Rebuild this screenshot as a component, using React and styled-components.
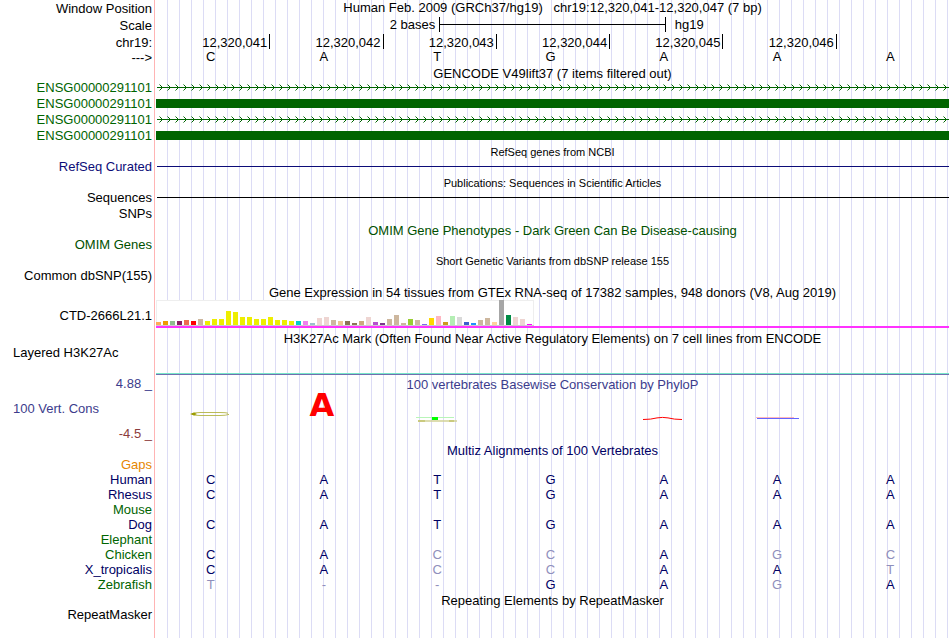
import React from "react";
import styled, { createGlobalStyle } from "styled-components";

const GlobalStyle = createGlobalStyle`
    body{
        margin: 0;
        background: white;
        color: black;
        font-family: "Liberation Sans", Arial, sans-serif;
        font-size: 13px;
    }
`;

const GREEN = "#006400";
const NAVY = "#000064";
const BLUE = "#0c0c78";
const CONS = "#3c3c8c";
const FADED = "#8f8fbc";

const positions = ["12,320,041", "12,320,042", "12,320,043", "12,320,044", "12,320,045", "12,320,046"];

//lower case letters are bases that differ from the human sequence
const species = [
    { name: "Gaps", color: "#e68600", bases: "" },
    { name: "Human", color: NAVY, bases: "CATGAAA" },
    { name: "Rhesus", color: NAVY, bases: "CATGAAA" },
    { name: "Mouse", color: GREEN, bases: "" },
    { name: "Dog", color: NAVY, bases: "CATGAAA" },
    { name: "Elephant", color: GREEN, bases: "" },
    { name: "Chicken", color: GREEN, bases: "CAccAgc" },
    { name: "X_tropicalis", color: NAVY, bases: "CAccAAt" },
    { name: "Zebrafish", color: GREEN, bases: "t--GAgA" },
];

//[height, color] for each tissue
const tissues = [
    [3, "#ffaa56"], [4, "#ee9a00"], [4, "#8fbc8f"], [4, "#8b1c62"], [5, "#ee6a50"], [4, "#ff0000"],
    [6, "#cdb79e"], [4, "#eeee00"], [6, "#eeee00"], [6, "#eeee00"], [14, "#eeee00"], [13, "#eeee00"],
    [8, "#eeee00"], [8, "#eeee00"], [6, "#eeee00"], [6, "#eeee00"], [8, "#eeee00"], [5, "#eeee00"],
    [5, "#eeee00"], [4, "#eeee00"], [4, "#00cdcd"], [4, "#ee82ee"], [2, "#9ac0cd"], [7, "#eed5d2"],
    [8, "#eed5d2"], [5, "#cdb79e"], [4, "#eec591"], [4, "#8b7355"], [2, "#8b7355"], [4, "#cdaa7d"],
    [8, "#eed5d2"], [3, "#b452cd"], [2, "#7a378b"], [6, "#cdb79e"], [10, "#cdb79e"], [2, "#cdb79e"],
    [6, "#9acd32"], [5, "#cdb79e"], [1, "#7a67ee"], [7, "#ffd700"], [9, "#ffb6c1"], [3, "#cd9b1d"],
    [9, "#b4eeb4"], [8, "#d9d9d9"], [3, "#3a5fcd"], [2, "#1e90ff"], [5, "#cdb79e"], [7, "#cdb79e"],
    [3, "#ffd39b"], [25, "#a6a6a6"], [10, "#008b45"], [8, "#eed5d2"], [6, "#eed5d2"], [1, "#ff00ff"],
];

const Bases = ({ bases, color, line }) => (
    <Columns>
        {bases.split("").map((base, i) => (
            <Base key={i} $line={line} $color={base === base.toUpperCase() && base !== "-" ? color : FADED}>
                {base.toUpperCase()}
            </Base>
        ))}
    </Columns>
);

const Intron = ({ id }) => (
    <Arrows width="100%" height="16" aria-hidden="true">
        <defs>
            <pattern id={id} x="1" width="8" height="16" patternUnits="userSpaceOnUse">
                <path d="M0 7.5H8" stroke={GREEN} />
                <path d="M2.5 4.5L5.5 7.5L2.5 10.5" fill="none" stroke={GREEN} />
            </pattern>
        </defs>
        <rect x="1" width="100%" height="16" fill={`url(#${id})`} />
    </Arrows>
);

const Expression = () => (
    <Chart width="378" height="26" shapeRendering="crispEdges" role="img" aria-label="Gene expression">
        <rect x="0.5" y="0.5" width="377" height="25" fill="white" stroke="#eeeeee" />
        <path d="M0 25.5H378" stroke="#cccccc" />
        {tissues.map(([height, color], i) => (
            <rect key={i} x={i * 7} y={25 - height} width="5" height={height} fill={color} />
        ))}
    </Chart>
);

//conservation shapes, one for each base
const logos = [
    <>
        <path d="M72 22.2Q70 21.5 64 21.5H44Q37 21.5 36 23Q37 24.5 44 24.5H64Q70 24.5 73 23.4" fill="none" stroke="#b4b446" strokeWidth="0.9" />
        <path d="M34 23L38 21.6L41 23L38 24.4Z" fill="#9c9c00" />
    </>,
    <text x="53" y="25" textAnchor="middle" fill="#ff0000">A</text>,
    <>
        <path d="M33 26.5H71" stroke="#b8f5b8" />
        <rect x="49" y="26" width="6" height="3" fill="#00ff00" />
        <path d="M35 30H74" stroke="#d2d296" strokeWidth="1.6" />
        <path d="M35 30H42M66 30H71" stroke="#c3c36e" strokeWidth="1.6" />
    </>,
    null,
    <path d="M34 28.5Q42 28.5 48 26.9Q53.5 25.9 59 26.9Q65 28.5 73 28.5" fill="none" stroke="#ff0000" />,
    <>
        <path d="M34 26.5H72" stroke="#ff9c9c" strokeWidth="0.7" />
        <path d="M35 27.5H77" stroke="#6464ff" />
    </>,
    null,
];

const App = () => {
    return (
        <>
            <GlobalStyle />
            <Browser>
                <Row $height={17}>
                    <Label $line={17}>Window Position</Label>
                    <Track>
                        <Title $line={15}>Human Feb. 2009 (GRCh37/hg19) &nbsp; chr19:12,320,041-12,320,047 (7 bp)</Title>
                    </Track>
                </Row>
                <Row $height={17}>
                    <Label $line={17}>Scale</Label>
                    <Scale>
                        <ScaleText $align="right">2 bases</ScaleText>
                        <ScaleBar />
                        <ScaleText>hg19</ScaleText>
                    </Scale>
                </Row>
                <Row $height={16}>
                    <Label $line={17}>chr19:</Label>
                    <Columns>
                        {positions.map((position) => (
                            <Position key={position}>{position}</Position>
                        ))}
                    </Columns>
                </Row>
                <Row $height={15}>
                    <Label>---&gt;</Label>
                    <Bases bases="CATGAAA" color="black" line={13} />
                </Row>

                <TrackTitle>GENCODE V49lift37 (7 items filtered out)</TrackTitle>
                {[1, 2].map((n) => (
                    <React.Fragment key={n}>
                        <Row>
                            <Label $color={GREEN}>ENSG00000291101</Label>
                            <Track><Intron id={`intron-${n}`} /></Track>
                        </Row>
                        <Row>
                            <Label $color={GREEN}>ENSG00000291101</Label>
                            <Track><Exon /></Track>
                        </Row>
                    </React.Fragment>
                ))}

                <TrackTitle $small>RefSeq genes from NCBI</TrackTitle>
                <Row>
                    <Label $color={BLUE}>RefSeq Curated</Label>
                    <Track><Line $color={BLUE} /></Track>
                </Row>

                <TrackTitle $small>Publications: Sequences in Scientific Articles</TrackTitle>
                <Row>
                    <Label>Sequences</Label>
                    <Track><Line $color="black" /></Track>
                </Row>
                <Row>
                    <Label>SNPs</Label>
                </Row>

                <TrackTitle $color="#005000">OMIM Gene Phenotypes - Dark Green Can Be Disease-causing</TrackTitle>
                <Row>
                    <Label $color="#005000">OMIM Genes</Label>
                </Row>

                <TrackTitle $small>Short Genetic Variants from dbSNP release 155</TrackTitle>
                <Row>
                    <Label>Common dbSNP(155)</Label>
                </Row>

                <TrackTitle>Gene Expression in 54 tissues from GTEx RNA-seq of 17382 samples, 948 donors (V8, Aug 2019)</TrackTitle>
                <Row $height={31}>
                    <Label $line={33}>CTD-2666L21.1</Label>
                    <Track>
                        <Expression />
                        <GeneModel />
                    </Track>
                </Row>

                <TrackTitle>H3K27Ac Mark (Often Found Near Active Regulatory Elements) on 7 cell lines from ENCODE</TrackTitle>
                <Row $height={31}>
                    <Label $left>Layered H3K27Ac</Label>
                    <Track><Signal /></Track>
                </Row>

                <Row $height={66}>
                    <Axis>
                        <Label $color={CONS}>4.88 _</Label>
                        <Label $left $color={CONS}>100 Vert. Cons</Label>
                        <Label $color="#8c3c3c">-4.5 _</Label>
                    </Axis>
                    <Track>
                        <Title $color={CONS}>100 vertebrates Basewise Conservation by PhyloP</Title>
                        <Logos>
                            {logos.map((logo, i) => (
                                <svg key={i} width="100%" height="34">{logo}</svg>
                            ))}
                        </Logos>
                    </Track>
                </Row>

                <TrackTitle $color={NAVY}>Multiz Alignments of 100 Vertebrates</TrackTitle>
                {species.map(({ name, color, bases }) => (
                    <Row key={name} $height={15}>
                        <Label $color={color}>{name}</Label>
                        <Bases bases={bases} color={NAVY} />
                    </Row>
                ))}

                <TrackTitle>Repeating Elements by RepeatMasker</TrackTitle>
                <Row>
                    <Label>RepeatMasker</Label>
                </Row>
            </Browser>
        </>
    );
};

//one title line above the items of a track
const TrackTitle = ({ children, $small, $color }) => (
    <Row $height={15}>
        <Label />
        <Track>
            <Title $small={$small} $color={$color}>{children}</Title>
        </Track>
    </Row>
);

const Browser = styled.main`
    box-sizing: border-box;
    min-height: 100vh;
    padding-right: 1px;
    background-image:
        linear-gradient(90deg, transparent 154px, #ffb4b4 154px, #ffb4b4 155px, white 155px, white 156px, transparent 156px),
        linear-gradient(90deg, white 155px, transparent 155px),
        repeating-linear-gradient(90deg, transparent 0, transparent 11px, #dcdcf5 11px, #dcdcf5 12px);
`;

const Row = styled.div`
    display: flex;
    align-items: flex-start;
    height: ${({ $height }) => $height || 16}px;
    white-space: nowrap;
`;

const Label = styled.div`
    box-sizing: border-box;
    flex: none;
    width: 156px;
    padding: 0 4px 0 13px;
    line-height: ${({ $line }) => $line || 16}px;
    text-align: ${({ $left }) => ($left ? "left" : "right")};
    color: ${({ $color }) => $color || "black"};
`;

const Axis = styled.div`
    display: flex;
    flex-direction: column;
    justify-content: space-between;
    height: 100%;
`;

const Track = styled.div`
    flex: 1;
    min-width: 0;
`;

const Title = styled.div`
    height: 15px;
    line-height: ${({ $line }) => $line || 17}px;
    text-align: center;
    font-size: ${({ $small }) => ($small ? 11 : 13)}px;
    color: ${({ $color }) => $color || "black"};
`;

const Columns = styled(Track)`
    display: grid;
    grid-template-columns: repeat(7, 1fr);
`;

const Logos = styled(Columns)`
    svg{
        display: block;
        overflow: visible;
    }
    text{
        font-family: "DejaVu Sans", sans-serif;
        font-size: 32px;
        font-weight: bold;
    }
`;

const Base = styled.span`
    padding-right: 4px;
    line-height: ${({ $line }) => $line || 15}px;
    text-align: center;
    color: ${({ $color }) => $color};
`;

const Position = styled.span`
    height: 15px;
    margin-right: -1px;
    padding-right: 2px;
    border-right: 1px solid black;
    line-height: 17px;
    text-align: right;
`;

const Scale = styled(Track)`
    display: grid;
    grid-template-columns: 5fr 4fr 5fr;
`;

const ScaleText = styled.span`
    padding: 0 4px 0 9px;
    line-height: 15px;
    text-align: ${({ $align }) => $align || "left"};
`;

const ScaleBar = styled.div`
    height: 15px;
    border: solid black;
    border-width: 0 1px;
    background: linear-gradient(black, black) 0 7px / 100% 1px no-repeat;
`;

const Arrows = styled.svg`
    display: block;
`;

const Exon = styled.div`
    height: 9px;
    margin-top: 3px;
    background: ${GREEN};
`;

const Line = styled.div`
    height: 1px;
    margin: 7px 0 0 1px;
    background: ${({ $color }) => $color};
`;

const Chart = styled.svg`
    display: block;
    margin-top: 1px;
`;

const GeneModel = styled.div`
    height: 2px;
    background: #ff32ff;
`;

const Signal = styled.div`
    height: 1px;
    margin-top: 28px;
    border-bottom: 1px solid #7070b0;
    background: #78e6c8;
`;

export default App;
